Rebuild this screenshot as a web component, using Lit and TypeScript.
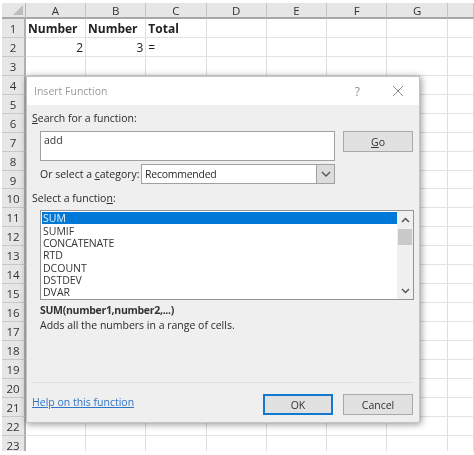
import { LitElement, html, css } from "lit";
import { customElement } from "lit/decorators.js";

const COLS = ["A", "B", "C", "D", "E", "F", "G", ""];
const FUNCS = ["SUM", "SUMIF", "CONCATENATE", "RTD", "DCOUNT", "DSTDEV", "DVAR"];
const ROWS = Array.from({ length: 23 }, (_, i) => i + 1);
const CELLS: Record<string, string> = { "1-0": "Number", "1-1": "Number", "1-2": "Total", "2-0": "2", "2-1": "3", "2-2": "=" };

@customElement("app-root")
export class AppRoot extends LitElement {
  static styles = css`
    :host { display: block; position: relative; width: 474px; height: 455px; overflow: hidden; background: #fff;
      font-family: "Open Sans", "Noto Sans", sans-serif; color: #333; filter: blur(0.45px); }
    .sheet { display: grid; grid-template-columns: 24px 60px 60.3px 60.3px 60.3px 60.3px 60.3px 60.3px 1fr;
      grid-template-rows: 16px repeat(23, 18.95px); margin: 3px 0 0 2px; height: 448px; overflow: hidden; }
    .corner { background: #e6e6e6; border-right: 1px solid #b5b5b5; border-bottom: 2px solid #a8a8a8; position: relative; }
    .corner::after { content: ""; position: absolute; right: 2px; bottom: 2px; border-style: solid; border-width: 0 0 10px 10px;
      border-color: transparent transparent #bdbdbd transparent; }
    .ch { background: #e6e6e6; border-right: 1px solid #c4c4c4; border-bottom: 2px solid #a8a8a8; text-align: center;
      font-size: 11.5px; line-height: 15px; color: #333; }
    .rh { background: #e6e6e6; border-right: 2px solid #b0b0b0; border-bottom: 1px solid #c8c8c8; text-align: center;
      font-size: 11.5px; line-height: 10px; padding-top: 5px; box-sizing: border-box; color: #333; }
    .c { border-right: 1px solid #dedede; border-bottom: 1px solid #e2e2e2; font-size: 12px; line-height: 12px; padding: 4px 2px 0; box-sizing: border-box; color: #222; overflow: hidden; white-space: nowrap; }
    .c.b { font-weight: 700; font-size: 12px; }
    .c.r { text-align: right; }

    .dlg { position: absolute; left: 26px; top: 76px; width: 394px; height: 347px; box-sizing: border-box; background: #efefef;
      box-shadow: 1px 1px 7px rgba(0,0,0,.45); border: 1px solid #c4c4c4; display: flex; flex-direction: column; }
    .title { height: 28px; flex: none; background: #fff; display: flex; align-items: center; padding: 0 15px 0 7px; font-size: 10.5px; color: #9a9a9a; }
    .title span:first-child { flex: 1; }
    .q { font-size: 12px; color: #8f8f8f; margin-right: 32px; }
    .x { display: block; width: 12px; height: 12px; }
    .body { flex: 1; display: flex; flex-direction: column; padding: 6px 6px 0 5px; font-size: 10.5px; color: #2a2a2a; }
    u { text-underline-offset: 1px; }
    .lbl { line-height: 15px; height: 15px; }
    .search { display: flex; gap: 8px; margin: 5px 0 0 8px; align-items: flex-start; }
    .input { width: 295px; height: 30px; box-sizing: border-box; background: #fff; border: 1px solid #a0a0a0; padding: 1px 3px; line-height: 14px; color: #333; }
    .btn { width: 70px; height: 21px; box-sizing: border-box; background: #e1e1e1; border: 1px solid #a8a8a8; display: flex; align-items: center; justify-content: center; color: #333; }
    .cat { display: flex; align-items: center; margin: 3px 0 0 8px; height: 20px; }
    .cat .t { width: 101px; white-space: nowrap; }
    .sel { width: 194px; height: 20px; box-sizing: border-box; background: #fff; border: 1px solid #a0a0a0; display: flex; align-items: center; padding-left: 3px; }
    .sel span { flex: 1; letter-spacing: -0.25px; }
    .arrow { width: 17px; height: 18px; background: #dcdcdc; border-left: 1px solid #a0a0a0; display: flex; align-items: center; justify-content: center; }
    .fnlbl { margin-top: 7px; }
    .list { margin: 4px 0 0 8px; width: 374px; height: 90px; box-sizing: border-box; border: 1px solid #949494; background: #fff; display: flex; padding: 1px 0 0 1px; }
    .items { flex: 1; }
    .it { height: 12.3px; line-height: 12px; padding-left: 1px; font-size: 10.5px; color: #333; position: relative; top: 0.5px; }
    .it.con { letter-spacing: -0.25px; }
    .it.on { background: #0078d7; color: #e8f2fb; top: 0; line-height: 13px; }
    .sb { width: 16px; margin-top: -1px; background: #f0f0f0; display: flex; flex-direction: column; align-items: center; justify-content: space-between; padding: 6px 0 5px; box-sizing: border-box; position: relative; }
    .thumb { position: absolute; left: 1px; right: 1px; top: 18px; height: 16px; background: #c9c9c9; }
    .sig { margin: 3px 0 0 8px; font-weight: 700; line-height: 15px; font-size: 10.5px; color: #333; letter-spacing: -0.3px; }
    .desc { margin: 0 0 0 8px; line-height: 15px; }
    .sp { flex: 1; }
    .sep { height: 1px; background: #e0e0e0; margin-left: 1px; }
    .foot { height: 39px; flex: none; display: flex; align-items: flex-start; gap: 10px; padding-top: 11px; box-sizing: border-box; }
    .help { flex: 1; color: #2f74c8; text-decoration: underline; line-height: 16px; margin: 0; }
    .foot .btn { height: 21px; }
    .ok { border: 2px solid #1478d0; }
  `;

  render() {
    return html`
      <div class="sheet">
        <div class="corner"></div>
        ${COLS.map((c) => html`<div class="ch">${c}</div>`)}
        ${ROWS.map((r) => html`
          <div class="rh">${r}</div>
          ${COLS.map((_, i) => {
            const v = CELLS[`${r}-${i}`] ?? "";
            const cls = r === 1 ? "c b" : r === 2 && i < 2 ? "c r" : "c";
            return html`<div class=${cls}>${v}</div>`;
          })}`)}
      </div>
      <div class="dlg">
        <div class="title">
          <span>Insert Function</span>
          <span class="q">?</span>
          <svg class="x" viewBox="0 0 12 12"><path d="M1 1L11 11M11 1L1 11" stroke="#8c8c8c" stroke-width="1" fill="none"/></svg>
        </div>
        <div class="body">
          <div class="lbl"><u>S</u>earch for a function:</div>
          <div class="search">
            <div class="input">add</div>
            <div class="btn"><span><u>G</u>o</span></div>
          </div>
          <div class="cat">
            <span class="t">Or select a <u>c</u>ategory:</span>
            <div class="sel">
              <span>Recommended</span>
              <div class="arrow"><svg width="10" height="6" viewBox="0 0 10 6"><path d="M1 1L5 5L9 1" stroke="#555" stroke-width="1.4" fill="none"/></svg></div>
            </div>
          </div>
          <div class="lbl fnlbl">Select a functio<u>n</u>:</div>
          <div class="list">
            <div class="items">
              ${FUNCS.map((f, i) => html`<div class="it ${i === 0 ? "on" : ""} ${f === "CONCATENATE" ? "con" : ""}">${f}</div>`)}
            </div>
            <div class="sb">
              <svg width="9" height="6" viewBox="0 0 9 6"><path d="M1 5L4.5 1.5L8 5" stroke="#555" stroke-width="1.5" fill="none"/></svg>
              <div class="thumb"></div>
              <svg width="9" height="6" viewBox="0 0 9 6"><path d="M1 1L4.5 4.5L8 1" stroke="#555" stroke-width="1.5" fill="none"/></svg>
            </div>
          </div>
          <div class="sig">SUM(number1,number2,...)</div>
          <div class="desc">Adds all the numbers in a range of cells.</div>
          <div class="sp"></div>
          <div class="sep"></div>
          <div class="foot">
            <div class="help">Help on this function</div>
            <div class="btn ok">OK</div>
            <div class="btn">Cancel</div>
          </div>
        </div>
      </div>
    `;
  }
}
